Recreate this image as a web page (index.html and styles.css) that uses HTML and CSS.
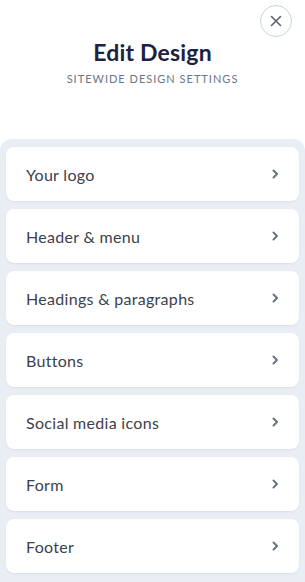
FILE: index.html
```html
<!DOCTYPE html>
<html>
<head>
<meta charset="utf-8">
<link rel="stylesheet" href="styles.css">
</head>
<body>
<div class="page">
  <header class="head">
    <button class="close" aria-label="Close">
      <svg width="12" height="12" viewBox="0 0 12 12"><path d="M1.5 1.5L10.5 10.5M10.5 1.5L1.5 10.5" stroke="#5a6472" stroke-width="1.6" stroke-linecap="round"/></svg>
    </button>
    <h1 class="title">Edit Design</h1>
    <p class="subtitle">SITEWIDE DESIGN SETTINGS</p>
  </header>
  <div class="panel">
    <div class="item"><span>Your logo</span><svg class="chev" width="7" height="10" viewBox="0 0 7 10"><path d="M1.5 1.5L5 5L1.5 8.5" fill="none" stroke="#687482" stroke-width="2" stroke-linecap="round" stroke-linejoin="round"/></svg></div>
    <div class="item"><span>Header &amp; menu</span><svg class="chev" width="7" height="10" viewBox="0 0 7 10"><path d="M1.5 1.5L5 5L1.5 8.5" fill="none" stroke="#687482" stroke-width="2" stroke-linecap="round" stroke-linejoin="round"/></svg></div>
    <div class="item"><span>Headings &amp; paragraphs</span><svg class="chev" width="7" height="10" viewBox="0 0 7 10"><path d="M1.5 1.5L5 5L1.5 8.5" fill="none" stroke="#687482" stroke-width="2" stroke-linecap="round" stroke-linejoin="round"/></svg></div>
    <div class="item"><span>Buttons</span><svg class="chev" width="7" height="10" viewBox="0 0 7 10"><path d="M1.5 1.5L5 5L1.5 8.5" fill="none" stroke="#687482" stroke-width="2" stroke-linecap="round" stroke-linejoin="round"/></svg></div>
    <div class="item"><span>Social media icons</span><svg class="chev" width="7" height="10" viewBox="0 0 7 10"><path d="M1.5 1.5L5 5L1.5 8.5" fill="none" stroke="#687482" stroke-width="2" stroke-linecap="round" stroke-linejoin="round"/></svg></div>
    <div class="item"><span>Form</span><svg class="chev" width="7" height="10" viewBox="0 0 7 10"><path d="M1.5 1.5L5 5L1.5 8.5" fill="none" stroke="#687482" stroke-width="2" stroke-linecap="round" stroke-linejoin="round"/></svg></div>
    <div class="item"><span>Footer</span><svg class="chev" width="7" height="10" viewBox="0 0 7 10"><path d="M1.5 1.5L5 5L1.5 8.5" fill="none" stroke="#687482" stroke-width="2" stroke-linecap="round" stroke-linejoin="round"/></svg></div>
  </div>
</div>
</body>
</html>
```
FILE: styles.css
```css
html, body {
  margin: 0;
  padding: 0;
  background: #ffffff;
  font-family: "Lato", "Noto Sans", sans-serif;
  overflow: hidden;
}
.page {
  width: 305px;
  height: 582px;
  display: flex;
  flex-direction: column;
}
.head {
  position: relative;
  height: 139px;
  box-sizing: border-box;
  padding-top: 39px;
  text-align: center;
}
.close {
  position: absolute;
  top: 5px;
  left: 260px;
  width: 32px;
  height: 32px;
  border-radius: 50%;
  border: 1px solid #c4d4e4;
  background: #fff;
  padding: 0;
  display: flex;
  align-items: center;
  justify-content: center;
}
.title {
  margin: 0;
  font-size: 23px;
  font-weight: 700;
  color: #1c2240;
  line-height: 27px;
  letter-spacing: 0.2px;
}
.subtitle {
  margin: 6px 0 0;
  font-size: 11px;
  letter-spacing: 1px;
  color: #6b7585;
  line-height: 14px;
}
.panel {
  flex: 1;
  background: #e9eef5;
  border-radius: 12px 12px 0 0;
  padding: 8px 6px 0;
  display: flex;
  flex-direction: column;
  gap: 8px;
}
.item {
  height: 54px;
  background: #fff;
  border-radius: 8px;
  box-shadow: 0 1px 2px rgba(30, 50, 80, 0.08);
  display: flex;
  align-items: center;
  justify-content: space-between;
  padding: 0 20px 0 20px;
  font-size: 16px;
  letter-spacing: 0.3px;
  color: #3c414c;
}
.chev {
  display: block;
}
```
